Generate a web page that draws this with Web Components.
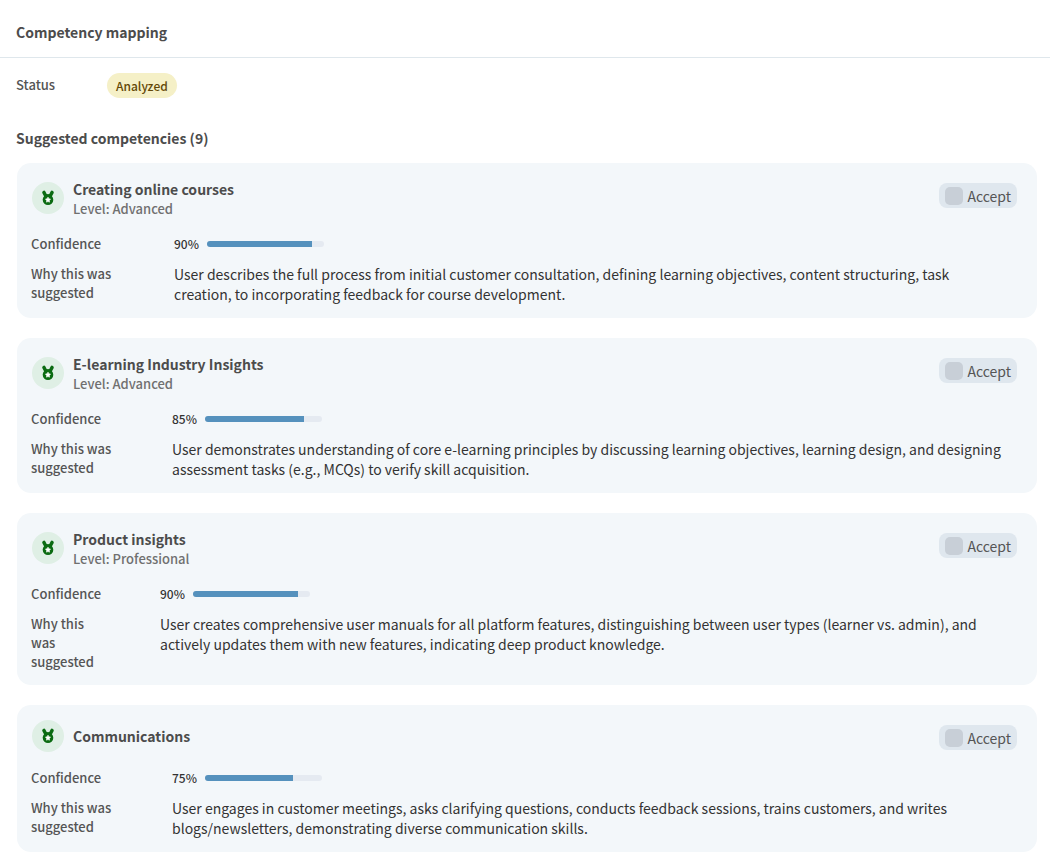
<!DOCTYPE html>
<html lang="en">
<head>
<meta charset="utf-8">
<title>Competency mapping</title>
<style>
  body {
    margin: 0;
    background: #fff;
    color: #333;
    font: 14px/20px "Noto Sans CJK SC", "Noto Sans", sans-serif;
  }
</style>
</head>
<body>
<competency-panel heading="Competency mapping">
  <status-badge slot="status">Analyzed</status-badge>
  <competency-card name="Creating online courses" level="Level: Advanced" confidence="90" style="--label-width:143px">User describes the full process from initial customer consultation, defining learning objectives, content structuring, task creation, to incorporating feedback for course development.</competency-card>
  <competency-card name="E-learning Industry Insights" level="Level: Advanced" confidence="85" style="--label-width:141px">User demonstrates understanding of core e-learning principles by discussing learning objectives, learning design, and designing assessment tasks (e.g., MCQs) to verify skill acquisition.</competency-card>
  <competency-card name="Product insights" level="Level: Professional" confidence="90" style="--label-width:129px">User creates comprehensive user manuals for all platform features, distinguishing between user types (learner vs. admin), and actively updates them with new features, indicating deep product knowledge.</competency-card>
  <competency-card name="Communications" confidence="75" style="--label-width:141px">User engages in customer meetings, asks clarifying questions, conducts feedback sessions, trains customers, and writes blogs/newsletters, demonstrating diverse communication skills.</competency-card>
</competency-panel>

<script>
class StatusBadge extends HTMLElement {
  constructor() {
    super();
    this.attachShadow({ mode: 'open' }).innerHTML = `
      <style>
        :host { display: inline-block; padding: 0 9px; border-radius: 13px; background: #f5f0c7; color: #634806; font-size: 12px; font-weight: 500; line-height: 25px; }
      </style><slot></slot>`;
  }
}
customElements.define('status-badge', StatusBadge);

class MedalIcon extends HTMLElement {
  constructor() {
    super();
    this.attachShadow({ mode: 'open' }).innerHTML = `
      <style>
        :host { display: flex; flex: none; align-items: center; justify-content: center; width: 32px; height: 32px; border-radius: 50%; background: #dfefe5; }
        svg { display: block; }
      </style>
      <svg width="14" height="16" viewBox="0 0 14 16" aria-hidden="true">
        <path d="M2.900 2.400L4.800 6M11.100 2.400L9.200 6" stroke="#0b6b12" stroke-width="3.400" stroke-linecap="round"/>
        <path d="M3.800 4.200H10.200V7H3.800Z" fill="#0b6b12"/>
        <circle cx="7" cy="9.700" r="5.300" fill="#0b6b12"/>
        <path d="M7 7.100l.9 1.600 1.700.4-1.200 1.350.15 1.750L7 11.600l-1.550.6.15-1.750L4.400 9.100l1.700-.4z" fill="#fff" stroke="#fff" stroke-width=".5" stroke-linejoin="round"/>
      </svg>`;
  }
}
customElements.define('medal-icon', MedalIcon);

class AcceptToggle extends HTMLElement {
  constructor() {
    super();
    this.attachShadow({ mode: 'open' }).innerHTML = `
      <style>
        :host { display: block; }
        label { display: flex; align-items: center; gap: 4px; height: 25px; padding: 0 6px; border-radius: 8px; background: #dfe7ee; color: #555; font-size: 14px; }
        input { appearance: none; width: 18px; height: 18px; margin: 0; border-radius: 5px; background: #c8cfd7; }
        input:checked { background: #5591bd; }
      </style>
      <label><input type="checkbox"><span>Accept</span></label>`;
  }
}
customElements.define('accept-toggle', AcceptToggle);

class CompetencyCard extends HTMLElement {
  constructor() {
    super();
    this.attachShadow({ mode: 'open' }).innerHTML = `
      <style>
        :host { display: flex; flex-direction: column; padding: 15px 14px 14px; border-radius: 14px; background: #f3f7fa; }
        header { display: flex; align-items: center; gap: 9px; margin: 0 6px 16px 1px; }
        .name { flex: 1; }
        h3 { margin: 0; color: #4c4c4c; font-size: 14px; line-height: 22px; font-weight: 700; }
        p { margin: 0; color: #707070; font-size: 13px; line-height: 18px; font-weight: 500; }
        p:empty { display: none; }
        accept-toggle { align-self: flex-start; margin-top: 5px; }
        dl { display: grid; grid-template-columns: var(--label-width) 1fr; row-gap: 10px; margin: 0; }
        dt { padding-right: 50px; color: #555; font-size: 13px; line-height: 19px; font-weight: 500; }
        dd { margin: 0; padding-right: 15px; }
        .meter { display: flex; align-items: center; gap: 8px; height: 20px; }
        .meter label { width: 25px; font-size: 12px; font-weight: 500; }
        progress { appearance: none; display: block; width: 117px; height: 6px; border: 0; border-radius: 3px; overflow: hidden; background: #e5eaf1; }
        progress::-webkit-progress-bar { background: #e5eaf1; }
        progress::-webkit-progress-value { background: #5591bd; }
      </style>
      <header>
        <medal-icon></medal-icon>
        <div class="name"><h3></h3><p></p></div>
        <accept-toggle></accept-toggle>
      </header>
      <dl>
        <dt>Confidence</dt>
        <dd class="meter"><label for="level"></label><progress id="level" max="100"></progress></dd>
        <dt>Why this was suggested</dt>
        <dd><slot></slot></dd>
      </dl>`;
  }
  connectedCallback() {
    const root = this.shadowRoot;
    const value = this.getAttribute('confidence');
    root.querySelector('h3').textContent = this.getAttribute('name');
    root.querySelector('p').textContent = this.getAttribute('level') || '';
    root.querySelector('.meter label').textContent = value + '%';
    root.querySelector('progress').value = Number(value);
  }
}
customElements.define('competency-card', CompetencyCard);

class CompetencyPanel extends HTMLElement {
  constructor() {
    super();
    this.attachShadow({ mode: 'open' }).innerHTML = `
      <style>
        :host { display: block; padding-bottom: 12px; }
        h1, h2 { margin: 0; color: #4c4c4c; font-size: 14px; line-height: 22px; font-weight: 700; }
        h1 { padding: 21px 16px 14px; border-bottom: 1px solid #dfe7ec; }
        .status { display: flex; align-items: flex-start; padding: 15px 16px 0; }
        .status span { width: 91px; color: #555; font-size: 13px; line-height: 24px; font-weight: 500; }
        h2 { padding: 29px 16px 14px; }
        .cards { display: flex; flex-direction: column; gap: 20px; margin: 0 13px 0 17px; }
      </style>
      <h1></h1>
      <div class="status"><span>Status</span><slot name="status"></slot></div>
      <h2>Suggested competencies (9)</h2>
      <div class="cards"><slot></slot></div>`;
  }
  connectedCallback() {
    this.shadowRoot.querySelector('h1').textContent = this.getAttribute('heading');
  }
}
customElements.define('competency-panel', CompetencyPanel);
</script>
</body>
</html>
